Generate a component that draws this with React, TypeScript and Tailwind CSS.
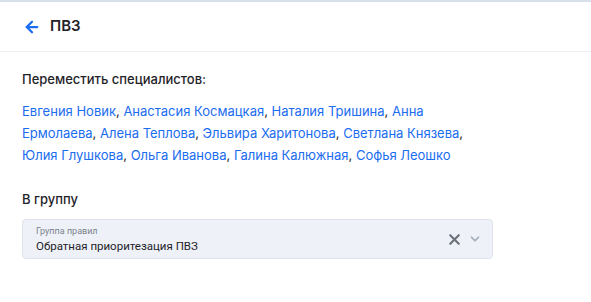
import { ArrowLeft, ChevronDown, X } from "lucide-react";

const people = [
  "Евгения Новик",
  "Анастасия Космацкая",
  "Наталия Тришина",
  "Анна Ермолаева",
  "Алена Теплова",
  "Эльвира Харитонова",
  "Светлана Князева",
  "Юлия Глушкова",
  "Ольга Иванова",
  "Галина Калюжная",
  "Софья Леошко",
];

export default function App() {
  return (
    <div className="min-h-screen bg-white border-t-2 border-[#d7dfe9] text-[#1f2329] font-['Inter',sans-serif]">
      <div className="h-[50px] flex items-center gap-[9px] px-[23px] border-b border-[#eef1f5]">
        <ArrowLeft className="w-[18px] h-[18px] text-[#1a6cf0]" strokeWidth={3} />
        <span className="text-[15px] font-semibold">ПВЗ</span>
      </div>

      <div className="px-[22px] pt-[17px]">
        <div className="text-[13px] font-medium leading-[20px]">Переместить специалистов:</div>
        <p className="mt-[11px] w-[470px] text-[13px] leading-[22px] text-[#1a6cf0]">
          {people.map((p, i) => (
            <span key={p}>
              {p}
              {i < people.length - 1 && <span className="text-[#1f2329]">, </span>}
            </span>
          ))}
        </p>

        <div className="mt-[23px] text-[13px] font-medium leading-[20px]">В группу</div>
        <div className="mt-[10px] w-[471px] h-[40px] rounded-[4px] border border-[#dfe4ec] bg-[#eef2f8] flex items-center pl-[13px] pr-[10px] font-['Roboto',sans-serif]">
          <div className="flex-1 flex flex-col pt-[2px]">
            <span className="text-[9px] leading-[13px] text-[#7b828c]">Группа правил</span>
            <span className="text-[11.5px] leading-[17px] text-[#1f2329]">Обратная приоритезация ПВЗ</span>
          </div>
          <X className="w-[17px] h-[17px] text-[#6b727c]" strokeWidth={3} />
          <ChevronDown className="ml-[5px] w-[14px] h-[14px] text-[#a3abb8]" strokeWidth={3} />
        </div>
      </div>
    </div>
  );
}
